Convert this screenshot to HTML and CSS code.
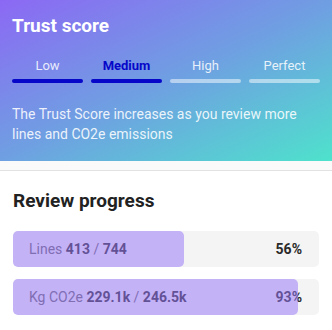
FILE: index.html
```html
<!DOCTYPE html>
<html lang="en">
<head>
    <meta charset="UTF-8">
    <meta name="viewport" content="width=device-width, initial-scale=1.0">
    <title>Trust score</title>
    <link rel="stylesheet" href="styles.css">
</head>
<body>
    <div class="trust">
        <h1 class="title">Trust score</h1>

        <div class="levels">
            <div class="level done">
                <span class="level-name">Low</span>
                <div class="level-bar"></div>
            </div>
            <div class="level done current">
                <span class="level-name">Medium</span>
                <div class="level-bar"></div>
            </div>
            <div class="level">
                <span class="level-name">High</span>
                <div class="level-bar"></div>
            </div>
            <div class="level">
                <span class="level-name">Perfect</span>
                <div class="level-bar"></div>
            </div>
        </div>

        <p class="description">
            The Trust Score increases as you review more lines and CO2e emissions
        </p>
    </div>

    <div class="divider"></div>

    <div class="progress">
        <h2 class="subtitle">Review progress</h2>

        <div class="progress-row">
            <span class="progress-label">Lines <b>413</b> / <b>744</b></span>
            <span class="progress-value">56%</span>
            <div class="progress-fill" style="width: 56%"></div>
        </div>

        <div class="progress-row">
            <span class="progress-label">Kg CO2e <b>229.1k</b> / <b>246.5k</b></span>
            <span class="progress-value">93%</span>
            <div class="progress-fill" style="width: 93%"></div>
        </div>
    </div>
</body>
</html>
```

FILE: styles.css
```css
* {
    margin: 0;
    padding: 0;
    box-sizing: border-box;
    font-family: 'Roboto', 'Liberation Sans', sans-serif;
}

body {
    background: white;
    width: 332px;
}

.trust {
    background: linear-gradient(155deg, #8c68f4 0%, #6f9fe2 50%, #4ee2cc 100%);
    padding: 14px 12px 17px;
    height: 161px;
}

.title {
    font-size: 19px;
    line-height: 24px;
    font-weight: 700;
    color: white;
}

.levels {
    display: flex;
    gap: 8px;
    margin-top: 19px;
}

.level {
    flex: 1;
    display: flex;
    flex-direction: column;
    align-items: center;
}

.level-name {
    font-size: 13px;
    line-height: 18px;
    color: rgba(255, 255, 255, 0.85);
}

.level-bar {
    width: 100%;
    height: 4px;
    margin-top: 4px;
    border-radius: 2px;
    background: rgba(255, 255, 255, 0.5);
}

.level.done .level-bar {
    background: #0707c9;
}

.level.current .level-name {
    color: #0707c9;
    font-weight: 700;
}

.description {
    margin-top: 21px;
    font-size: 14px;
    line-height: 20px;
    color: rgba(255, 255, 255, 0.88);
}

.divider {
    height: 10px;
    background: #fafafa;
    border-bottom: 1px solid #e2e2e2;
}

.progress {
    padding: 18px 13px 0;
}

.subtitle {
    font-size: 19px;
    line-height: 24px;
    font-weight: 700;
    color: #222;
}

.progress-row {
    position: relative;
    display: flex;
    justify-content: space-between;
    align-items: center;
    height: 36px;
    margin-top: 12px;
    padding: 0 17px 0 16px;
    background: #f4f4f4;
    border-radius: 5px;
    font-size: 14px;
}

.subtitle + .progress-row {
    margin-top: 18px;
}

.progress-label {
    color: #666;
}

.progress-label b,
.progress-value {
    color: #2a2a2a;
    font-weight: 700;
}

.progress-fill {
    position: absolute;
    left: 0;
    top: 0;
    bottom: 0;
    border-radius: 5px;
    background: rgba(152, 116, 250, 0.52);
}
```
